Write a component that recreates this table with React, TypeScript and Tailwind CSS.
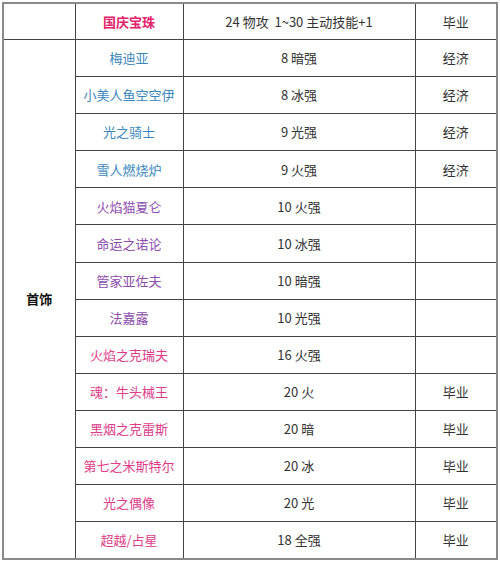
import React from "react";

type Row = { name: string; color: string; stat: string; tag: string };

const BLUE = "text-[#3a87bd]";
const PURPLE = "text-[#8d4cae]";
const PINK = "text-[#e03b88]";

const rows: Row[] = [
  { name: "梅迪亚", color: BLUE, stat: "8 暗强", tag: "经济" },
  { name: "小美人鱼空空伊", color: BLUE, stat: "8 冰强", tag: "经济" },
  { name: "光之骑士", color: BLUE, stat: "9 光强", tag: "经济" },
  { name: "雪人燃烧炉", color: BLUE, stat: "9 火强", tag: "经济" },
  { name: "火焰猫夏仑", color: PURPLE, stat: "10 火强", tag: "" },
  { name: "命运之诺论", color: PURPLE, stat: "10 冰强", tag: "" },
  { name: "管家亚佐夫", color: PURPLE, stat: "10 暗强", tag: "" },
  { name: "法嘉露", color: PURPLE, stat: "10 光强", tag: "" },
  { name: "火焰之克瑞夫", color: PINK, stat: "16 火强", tag: "" },
  { name: "魂：牛头械王", color: PINK, stat: "20 火", tag: "毕业" },
  { name: "黑烟之克雷斯", color: PINK, stat: "20 暗", tag: "毕业" },
  { name: "第七之米斯特尔", color: PINK, stat: "20 冰", tag: "毕业" },
  { name: "光之偶像", color: PINK, stat: "20 光", tag: "毕业" },
  { name: "超越/占星", color: PINK, stat: "18 全强", tag: "毕业" },
];

const cell = "border border-[#444] text-center align-middle p-0";

export default function App() {
  return (
    <div
      className="w-[500px] h-[564px] bg-white pl-[2px] pt-[2px]"
      style={{ fontFamily: '"Noto Sans CJK SC", "Noto Sans", sans-serif' }}
    >
      <table className="table-fixed border-collapse border-2 border-[#8a8a8a] w-[494px] text-[13px] text-[#333]">
        <colgroup>
          <col className="w-[72px]" />
          <col className="w-[108px]" />
          <col className="w-[232px]" />
          <col className="w-[82px]" />
        </colgroup>
        <tbody>
          <tr className="h-[36.5px]">
            <td className={cell} />
            <td className={`${cell} font-bold text-[#e4226b]`}>国庆宝珠</td>
            <td className={cell}>24 物攻&nbsp; 1~30 主动技能+1</td>
            <td className={cell}>毕业</td>
          </tr>
          {rows.map((r, i) => (
            <tr key={r.name} className="h-[37.1px]">
              {i === 0 && (
                <td rowSpan={rows.length} className={`${cell} font-bold text-[#111]`}>
                  首饰
                </td>
              )}
              <td className={`${cell} ${r.color}`}>{r.name}</td>
              <td className={cell}>{r.stat}</td>
              <td className={cell}>{r.tag}</td>
            </tr>
          ))}
        </tbody>
      </table>
    </div>
  );
}
